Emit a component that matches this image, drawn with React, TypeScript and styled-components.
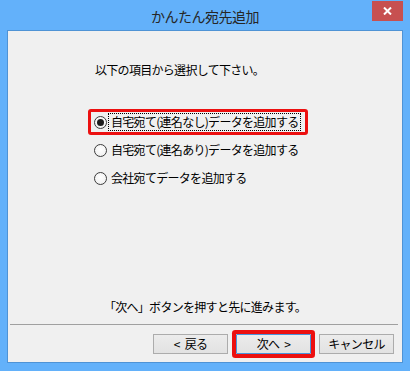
import React from 'react';
import styled, { createGlobalStyle } from 'styled-components';

const GlobalStyle = createGlobalStyle`
  html, body {
    margin: 0;
    padding: 0;
  }
  body {
    font-family: "Noto Sans CJK JP", "Noto Sans", sans-serif;
    background: #ffffff;
  }
`;

const Window = styled.div`
  width: 410px;
  height: 371px;
  box-sizing: border-box;
  padding: 0 7px 8px 7px;
  background: #63b1fa;
  display: flex;
  flex-direction: column;
`;

const TitleBar = styled.div`
  height: 30px;
  display: grid;
  grid-template-columns: 1fr auto 1fr;
  align-items: center;
`;

const Title = styled.div`
  grid-column: 2;
  font-size: 14px;
  letter-spacing: -0.5px;
  color: #262626;
  line-height: 16px;
  padding-top: 1px;
`;

const CloseButton = styled.div`
  grid-column: 3;
  justify-self: end;
  align-self: start;
  margin-top: 1px;
  width: 31px;
  height: 20px;
  background: #c75050;
  display: flex;
  align-items: center;
  justify-content: center;
`;

const Client = styled.div`
  flex: 1;
  background: #f0f0f0;
  border: 1px solid #4f93d5;
  display: flex;
  flex-direction: column;
  font-size: 12px;
  letter-spacing: -0.7px;
  color: #000;
`;

const Instruction = styled.div`
  margin: 32px 0 0 87px;
  line-height: 14px;
`;

const OptionList = styled.div`
  margin: 32px 0 0 80px;
  display: flex;
  flex-direction: column;
  align-items: flex-start;
  gap: 2px;
`;

const OptionRow = styled.div<{ $marked?: boolean }>`
  box-sizing: border-box;
  height: 26px;
  display: flex;
  align-items: center;
  padding: 0 4px 0 3px;
  border: 3px solid ${p => (p.$marked ? '#ec1010' : 'transparent')};
  border-radius: 3px;
`;

const Radio = styled.span<{ $checked?: boolean }>`
  box-sizing: border-box;
  width: 13px;
  height: 13px;
  border-radius: 50%;
  border: 1px solid #3c3c3c;
  background: radial-gradient(circle at 50% 40%, #ffffff 0%, #f2f2f2 70%, #dcdcdc 100%);
  display: flex;
  align-items: center;
  justify-content: center;

  &::after {
    content: '';
    width: 7px;
    height: 7px;
    border-radius: 50%;
    background: ${p => (p.$checked ? '#1c1c1c' : 'transparent')};
  }
`;

const OptionLabel = styled.span<{ $focused?: boolean }>`
  margin-left: 1px;
  line-height: 14px;
  padding: 1px 1px 1px 2px;
  border: 1px dotted ${p => (p.$focused ? '#000' : 'transparent')};
`;

const Spacer = styled.div`
  flex: 1;
`;

const Footnote = styled.div`
  text-align: center;
  line-height: 14px;
`;

const Separator = styled.div`
  margin: 10px 4px 0 2px;
  height: 1px;
  background: #a0a0a0;
`;

const ButtonRow = styled.div`
  display: flex;
  justify-content: flex-end;
  gap: 8px;
  padding: 9px 8px 8px 0;
`;

const Button = styled.div<{ $default?: boolean }>`
  box-sizing: border-box;
  width: 75px;
  height: 20px;
  border: 1px solid ${p => (p.$default ? '#4a94dc' : '#acacac')};
  background: linear-gradient(#ececec, #e2e2e2);
  display: flex;
  align-items: center;
  justify-content: center;
  gap: 5px;
  line-height: 14px;
  box-shadow: ${p => (p.$default ? '0 0 0 4px #ec1010' : 'none')};
  border-radius: ${p => (p.$default ? '1px' : '0')};
`;

const options = [
  { label: '自宅宛て(連名なし)データを追加する', checked: true },
  { label: '自宅宛て(連名あり)データを追加する', checked: false },
  { label: '会社宛てデータを追加する', checked: false },
];

const App: React.FC = () => {
  return (
    <>
      <GlobalStyle />
      <Window>
        <TitleBar>
          <Title>かんたん宛先追加</Title>
          <CloseButton>
            <svg width="9" height="8" viewBox="0 0 9 8">
              <path d="M1 0.5 L8 7.5 M8 0.5 L1 7.5" stroke="#fff" strokeWidth="2" />
            </svg>
          </CloseButton>
        </TitleBar>

        <Client>
          <Instruction>以下の項目から選択して下さい。</Instruction>

          <OptionList>
            {options.map(o => (
              <OptionRow key={o.label} $marked={o.checked}>
                <Radio $checked={o.checked} />
                <OptionLabel $focused={o.checked}>{o.label}</OptionLabel>
              </OptionRow>
            ))}
          </OptionList>

          <Spacer />

          <Footnote>「次へ」ボタンを押すと先に進みます。</Footnote>
          <Separator />

          <ButtonRow>
            <Button>
              <span>&lt;</span>
              <span>戻る</span>
            </Button>
            <Button $default>
              <span>次へ</span>
              <span>&gt;</span>
            </Button>
            <Button>キャンセル</Button>
          </ButtonRow>
        </Client>
      </Window>
    </>
  );
};

export default App;
